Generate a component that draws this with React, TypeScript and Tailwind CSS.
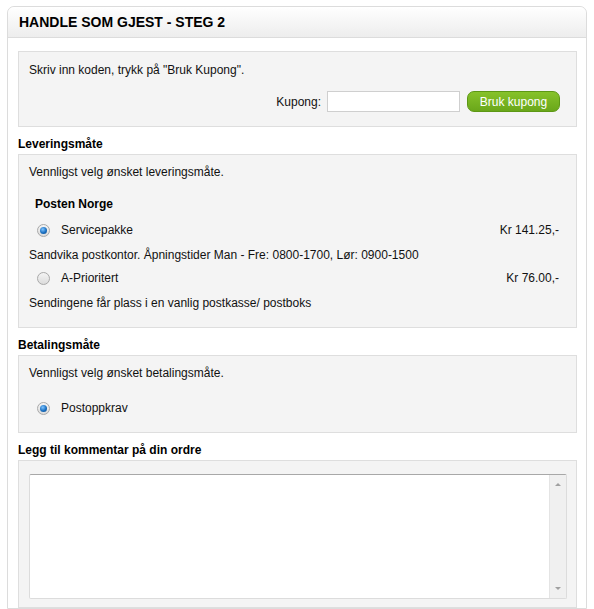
import React from 'react';

function Radio({ checked }: { checked?: boolean }) {
  return (
    <span className="w-[13px] h-[13px] shrink-0 rounded-full border border-[#a9a9a9] bg-gradient-to-b from-[#f4f4f4] to-[#dcdcdc] flex items-center justify-center">
      {checked && (
        <span className="w-[7px] h-[7px] rounded-full bg-[radial-gradient(circle_at_40%_35%,#7fc4ff_0%,#1a6fc0_55%,#0c4a8a_100%)]" />
      )}
    </span>
  );
}

function SectionLabel({ children }: { children: React.ReactNode }) {
  return <div className="mt-[9px] mb-[2px] leading-[16px] text-[12px] font-bold text-black">{children}</div>;
}

export default function App() {
  return (
    <div
      className="w-[594px] h-[609px] overflow-hidden bg-white text-[12px] text-[#111]"
      style={{ fontFamily: '"Liberation Sans", Arial, sans-serif' }}
    >
      <div className="ml-[7px] mt-[6px] w-[580px] border border-[#dcdcdc] rounded-t-[7px]">
        <div className="h-[31px] rounded-t-[7px] border-b border-[#dcdcdc] bg-gradient-to-b from-white to-[#ededed] pl-[11px] flex items-center">
          <span className="text-[14px] font-bold text-black leading-none">HANDLE SOM GJEST - STEG 2</span>
        </div>

        <div className="pl-[10px] pr-[9px] pt-[13px]">
          {/* coupon */}
          <div className="border border-[#dedede] bg-[#f4f4f4] pt-[11px] pb-[14px] pl-[10px] pr-[16px]">
            <div className="leading-[14px]">Skriv inn koden, trykk på "Bruk Kupong".</div>
            <div className="mt-[14px] flex items-center justify-end">
              <span className="mr-[6px]">Kupong:</span>
              <input className="w-[133px] h-[21px] border border-[#cfcfcf] bg-white outline-none" />
              <button className="ml-[7px] w-[93px] h-[21px] rounded-[7px] border border-[#5d9815] bg-gradient-to-b from-[#86c22a] to-[#6aa71a] text-white text-[12px] leading-none">
                Bruk kupong
              </button>
            </div>
          </div>

          <SectionLabel>Leveringsmåte</SectionLabel>
          <div className="border border-[#dedede] bg-[#f4f4f4] pt-[10px] pb-[17px] pl-[10px] pr-[17px]">
            <div className="leading-[14px]">Vennligst velg ønsket leveringsmåte.</div>
            <div className="mt-[18px] pl-[6px] leading-[14px] font-bold text-black">Posten Norge</div>
            <div className="mt-[9px] h-[20px] pl-[8px] flex items-center">
              <Radio checked />
              <span className="ml-[11px] flex-1">Servicepakke</span>
              <span>Kr 141.25,-</span>
            </div>
            <div className="mt-[8px] leading-[14px]">
              Sandvika postkontor. Åpningstider Man - Fre: 0800-1700, Lør: 0900-1500
            </div>
            <div className="mt-[6px] h-[20px] pl-[8px] flex items-center">
              <Radio />
              <span className="ml-[11px] flex-1">A-Prioritert</span>
              <span>Kr 76.00,-</span>
            </div>
            <div className="mt-[8px] leading-[14px]">Sendingene får plass i en vanlig postkasse/ postboks</div>
          </div>

          <SectionLabel>Betalingsmåte</SectionLabel>
          <div className="border border-[#dedede] bg-[#f4f4f4] pt-[10px] pb-[14px] pl-[10px] pr-[15px]">
            <div className="leading-[14px]">Vennligst velg ønsket betalingsmåte.</div>
            <div className="mt-[18px] h-[20px] pl-[8px] flex items-center">
              <Radio checked />
              <span className="ml-[11px]">Postoppkrav</span>
            </div>
          </div>

          <SectionLabel>Legg til kommentar på din ordre</SectionLabel>
          <div className="border border-[#dedede] bg-[#f4f4f4] pt-[13px] pb-[8px] pl-[10px] pr-[9px]">
            <div className="h-[125px] flex border border-[#dcdcdc] border-t-[#a8a8a8] bg-white rounded-[2px]">
              <div className="flex-1" />
              <div className="w-[17px] bg-[#f0f0f0] border-l border-[#e4e4e4] flex flex-col items-center justify-between py-[8px]">
                <span className="w-0 h-0 border-l-[3px] border-r-[3px] border-b-[3px] border-l-transparent border-r-transparent border-b-[#a0a0a0]" />
                <span className="w-0 h-0 border-l-[3px] border-r-[3px] border-t-[3px] border-l-transparent border-r-transparent border-t-[#a0a0a0]" />
              </div>
            </div>
          </div>
        </div>
      </div>
    </div>
  );
}
